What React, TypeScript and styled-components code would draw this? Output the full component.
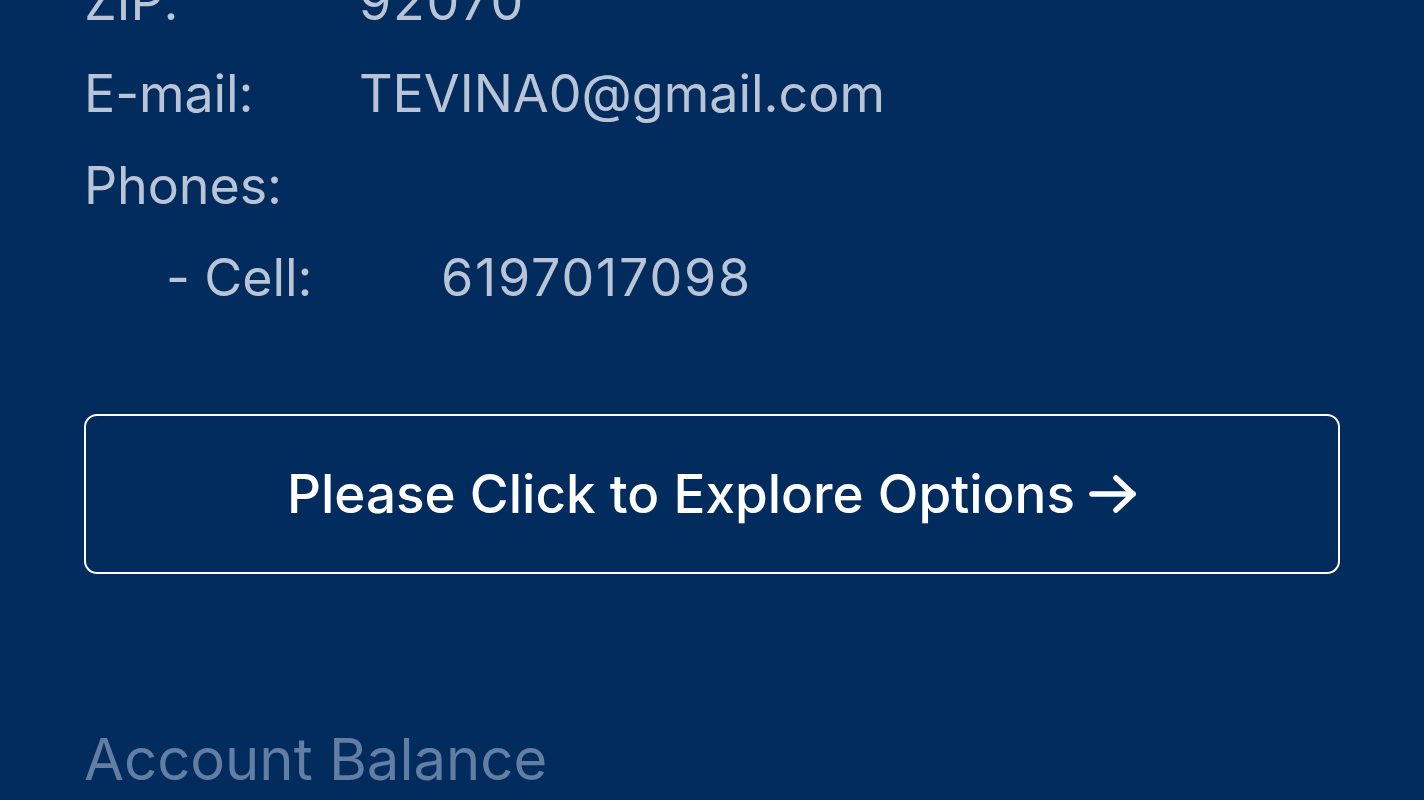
import React from "react";
import styled, { createGlobalStyle } from "styled-components";

const Global = createGlobalStyle`
  html, body {
    margin: 0;
    padding: 0;
    background: #022b5e;
    overflow: hidden;
  }
  body {
    font-family: Inter, "Noto Sans", sans-serif;
  }
`;

const Page = styled.div`
  width: 1424px;
  height: 800px;
  background: #022b5e;
  overflow: hidden;
`;

const Content = styled.div`
  display: flex;
  flex-direction: column;
  padding: 0 84px;
  margin-top: -44px;
`;

const InfoList = styled.div`
  display: flex;
  flex-direction: column;
`;

const Row = styled.div<{ $indent?: boolean }>`
  display: grid;
  grid-template-columns: 275px 1fr;
  padding-left: ${(p) => (p.$indent ? "82px" : "0px")};
  font-size: 52px;
  line-height: 92px;
  color: #b9c5d6;
  letter-spacing: -0.1px;
`;

const Label = styled.span``;
const Value = styled.span<{ $numeric?: boolean }>`
  letter-spacing: ${(p) => (p.$numeric ? "1.8px" : "0")};
`;

const ExploreButton = styled.button`
  margin-top: 90px;
  height: 160px;
  width: 100%;
  box-sizing: border-box;
  border: 2px solid #ffffff;
  border-radius: 13px;
  background: transparent;
  color: #ffffff;
  font-family: Inter, "Noto Sans", sans-serif;
  font-size: 53px;
  font-weight: 500;
  display: flex;
  align-items: center;
  justify-content: center;
  gap: 14px;
  cursor: pointer;
  padding: 0;
`;

const SectionTitle = styled.div`
  margin-top: 149px;
  font-size: 58px;
  line-height: 72px;
  color: #627ea3;
`;

const Arrow = () => (
  <svg width="48" height="40" viewBox="0 0 48 40" fill="none">
    <path d="M3 20 H44" stroke="#fff" strokeWidth="5.5" strokeLinecap="round" />
    <path d="M27 4 L44 20 L27 36" stroke="#fff" strokeWidth="5.5" strokeLinecap="round" strokeLinejoin="round" />
  </svg>
);

export default function App() {
  return (
    <Page>
      <Global />
      <Content>
        <InfoList>
          <Row>
            <Label>ZIP:</Label>
            <Value $numeric>92070</Value>
          </Row>
          <Row>
            <Label>E-mail:</Label>
            <Value>TEVINA0@gmail.com</Value>
          </Row>
          <Row>
            <Label>Phones:</Label>
            <Value />
          </Row>
          <Row $indent>
            <Label>- Cell:</Label>
            <Value $numeric>6197017098</Value>
          </Row>
        </InfoList>
        <ExploreButton>
          Please Click to Explore Options
          <Arrow />
        </ExploreButton>
        <SectionTitle>Account Balance</SectionTitle>
      </Content>
    </Page>
  );
}
